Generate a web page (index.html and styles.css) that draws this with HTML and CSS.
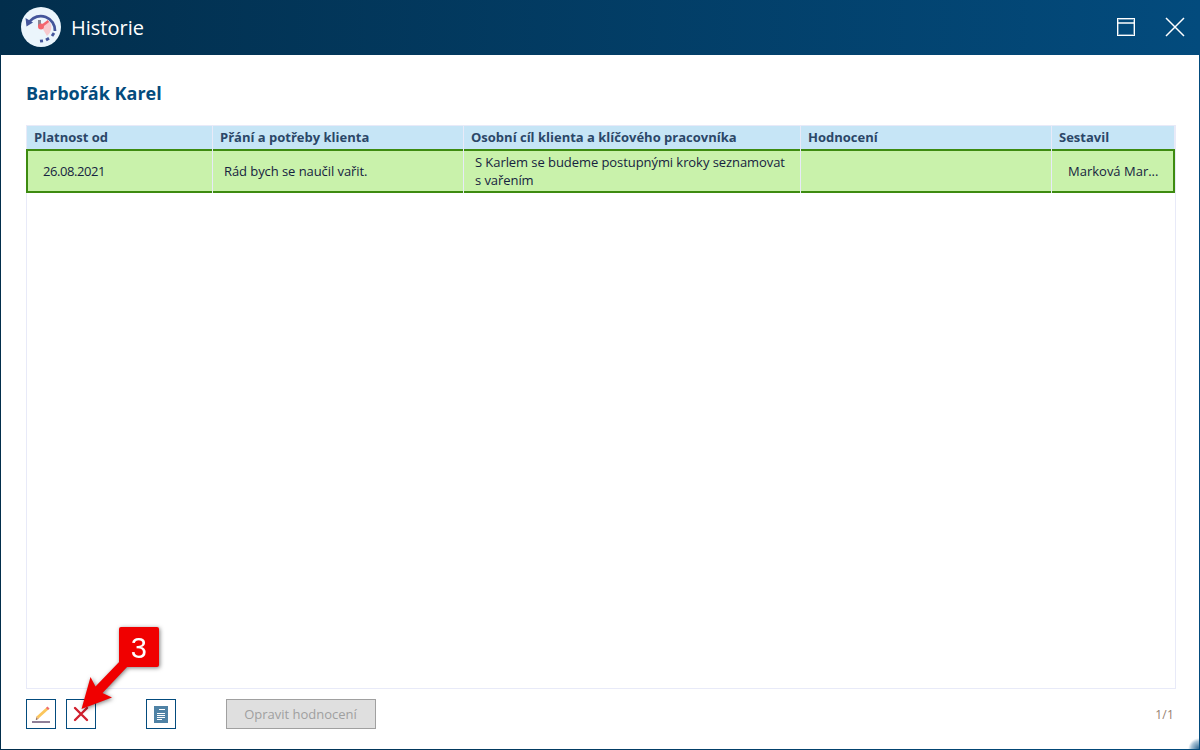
FILE: index.html
```
<!DOCTYPE html>
<html lang="cs">
  <head>
    <meta charset="UTF-8" />
    <meta name="viewport" content="width=device-width, initial-scale=1.0" />
    <link rel="stylesheet" href="styles.css">
    <title>Historie</title>
  </head>
  <body>
    <div class="window">
      <header class="titlebar">
        <svg class="logo" width="40" height="40" viewBox="0 0 40 40">
          <circle cx="20" cy="20" r="20" fill="#ebf5fc" />
          <path d="M20 19 L29 15 A11 11 0 0 1 26 29 Z" fill="#f7c9ce" />
          <path d="M8.500 14.500 A14.300 14.300 0 0 1 34 24" fill="none" stroke="#44559b" stroke-width="2.800" />
          <path d="M4.500 11 L12 15.500 L5.500 19.500 Z" fill="#44559b" />
          <path d="M33 26 L31 29 M28 31.200 L25 33 M22 33.800 L19 34.200" stroke="#44559b" stroke-width="2.800" />
          <path d="M18.500 13 V19" stroke="#8a8795" stroke-width="3" />
          <path d="M19.500 20 L27.500 14" stroke="#f4646c" stroke-width="2.600" />
          <circle cx="20" cy="19.500" r="3" fill="#f4646c" />
        </svg>
        <h1 class="title">Historie</h1>
        <div class="controls">
          <svg width="18" height="18" viewBox="0 0 18 18">
            <rect x="0.500" y="0.500" width="17" height="17" fill="none" stroke="#fff" />
            <rect x="1.500" y="1.500" width="15" height="15" fill="none" stroke="#fff" stroke-opacity="0.400" />
            <path d="M1 5 H17" stroke="#fff" stroke-opacity="0.750" stroke-width="2" />
          </svg>
          <svg width="20" height="20" viewBox="0 0 20 20">
            <path d="M1 1 L19 19 M19 1 L1 19" stroke="#fff" stroke-width="1.500" />
          </svg>
        </div>
      </header>

      <main class="content">
        <h2 class="client">Barbořák Karel</h2>

        <div class="table">
          <div class="row head">
            <div class="cell">Platnost od</div>
            <div class="cell">Přání a potřeby klienta</div>
            <div class="cell">Osobní cíl klienta a klíčového pracovníka</div>
            <div class="cell">Hodnocení</div>
            <div class="cell">Sestavil</div>
          </div>
          <div class="row selected">
            <div class="cell date">26.08.2021</div>
            <div class="cell">Rád bych se naučil vařit.</div>
            <div class="cell">S Karlem se budeme postupnými kroky seznamovat<br>s vařením</div>
            <div class="cell"></div>
            <div class="cell author">Marková Mar...</div>
          </div>
        </div>

        <footer class="toolbar">
          <button class="tool">
            <svg width="28" height="28" viewBox="0 0 28 28">
              <path d="M5 22 H23" stroke="#8f8098" stroke-width="2" />
              <path d="M10.500 17.500 L20.500 8.500" stroke="#fbc65c" stroke-width="3" />
              <path d="M20 9 L21.500 7.500" stroke="#ee6c72" stroke-width="3" />
              <path d="M9.200 16.200 L12 18.700 L8.800 20 Z" fill="#e0ad7c" />
              <path d="M9.500 18 L10.500 19.200 L8.800 20 Z" fill="#665e68" />
            </svg>
          </button>
          <button class="tool">
            <svg width="28" height="28" viewBox="0 0 28 28">
              <path d="M8 8 L20 20 M20 8 L8 20" stroke="#d0202e" stroke-width="2.400" stroke-linecap="round" />
            </svg>
          </button>
          <button class="tool report">
            <svg width="28" height="28" viewBox="0 0 28 28">
              <rect x="7" y="6" width="14" height="17" fill="#4f82a5" />
              <path d="M12 9.500 H18 M10 13.500 H18 M10 15.500 H18 M10 17.500 H18 M10 19.500 H15" stroke="#fff" />
            </svg>
          </button>
          <button class="fix" disabled>Opravit hodnocení</button>
          <span class="count">1/1</span>
        </footer>
      </main>

      <div class="resize"></div>

      <!-- step marker -->
      <svg class="marker" width="100" height="104" viewBox="0 0 100 104">
        <path d="M41 49 L15.500 75.500 L10.500 66 L1.500 98 L32 86.500 L22.500 82 L48 55 Z" fill="#f00000" />
        <rect x="39" y="16" width="40" height="40" rx="2" fill="#f00000" />
        <text x="58.800" y="46.500" text-anchor="middle">3</text>
      </svg>
    </div>
  </body>
</html>
```
FILE: styles.css
```
* {
  box-sizing: border-box;
  margin: 0;
  padding: 0;
}

body {
  font-family: "Open Sans", "Noto Sans", sans-serif;
  font-size: 13px;
  color: #16233f;
}

.window {
  position: relative;
  display: flex;
  flex-direction: column;
  height: 750px;
  padding: 0 1px 1px;
  background: linear-gradient(90deg, #022e4c, #034b7d);
  overflow: hidden;
}

.titlebar {
  display: flex;
  align-items: center;
  height: 55px;
  padding: 0 14px 1px 20px;
}

.title {
  margin-left: 10px;
  padding-top: 1px;
  font-size: 20px;
  font-weight: 400;
  color: #fff;
}

.controls {
  display: flex;
  align-items: center;
  gap: 30px;
  margin-left: auto;
}

.content {
  display: flex;
  flex: 1;
  flex-direction: column;
  padding: 25px 23px 20px 25px;
  background: #fff;
}

.client {
  height: 45px;
  font-size: 18px;
  line-height: 26px;
  font-weight: 700;
  color: #034b7d;
}

.table {
  flex: 1;
  border: 1px solid #e8eaf8;
}

.row {
  display: grid;
  grid-template-columns: 185px 250px 336px 250px 1fr;
  gap: 1px;
  background: #e8eaf8;
}

.head {
  height: 23px;
  padding-right: 1px;
}

.head .cell {
  padding-left: 7px;
  line-height: 23px;
  font-weight: 700;
  color: #2b4768;
  background: #c6e5f6;
}

.selected {
  grid-template-columns: 186px 250px 336px 250px 1fr;
  height: 44px;
  margin-left: -1px;
}

.selected .cell {
  display: flex;
  align-items: center;
  padding-left: 11px;
  line-height: 18px;
  letter-spacing: -0.07px;
  white-space: nowrap;
  background: #c9f2ab;
  border: solid #3d8b10;
  border-width: 2px 0;
}

.selected .date {
  padding-left: 15px;
  letter-spacing: -0.43px;
  border-left-width: 2px;
}

.selected .author {
  padding-left: 16px;
  letter-spacing: 0;
  border-right-width: 2px;
}

.toolbar {
  display: flex;
  align-items: center;
  height: 30px;
  margin-top: 10px;
}

.tool {
  width: 30px;
  height: 30px;
  margin-right: 10px;
  background: #fff;
  border: 1px solid #034b7d;
}

.tool svg {
  display: block;
}

.report {
  margin: 0 50px 0 40px;
}

.fix {
  width: 150px;
  height: 30px;
  padding-right: 1px;
  font: inherit;
  color: #a0a0a0;
  background: #dfdfdf;
  border: 1px solid #a0a0a0;
}

.count {
  margin: 0 2px 0 auto;
  font-size: 12px;
  letter-spacing: 0.2px;
  color: #967f70;
}

.resize {
  position: absolute;
  right: 1px;
  bottom: 1px;
  width: 11px;
  height: 11px;
  background: radial-gradient(circle at 100% 100%, #2c6590, #a9c3d6 50%, transparent 70%);
}

.marker {
  position: absolute;
  left: 80px;
  top: 611px;
  filter: drop-shadow(1px 1px 2px rgba(0, 0, 0, 0.5));
}

.marker text {
  font-family: "Liberation Sans", Arial, sans-serif;
  font-size: 29px;
  fill: #fff;
}
```
